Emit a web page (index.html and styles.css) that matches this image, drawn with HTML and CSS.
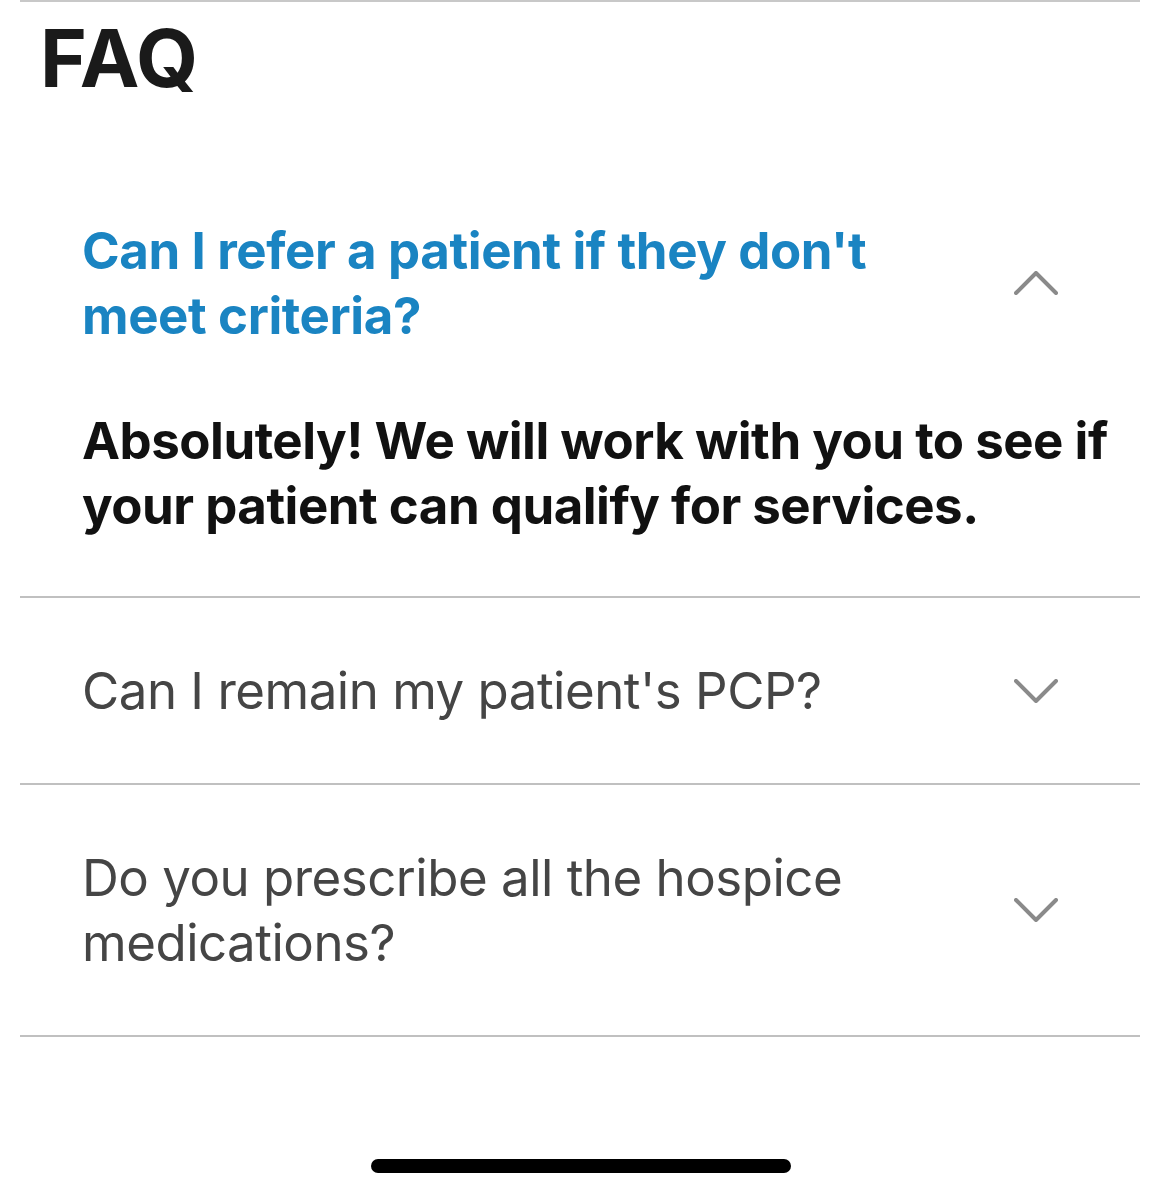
FILE: index.html
```html
<!DOCTYPE html>
<html lang="en">
  <head>
    <meta charset="UTF-8" />
    <meta name="viewport" content="width=device-width, initial-scale=1.0" />
    <title>FAQ</title>
    <link rel="stylesheet" href="styles.css">
  </head>

  <body>
    <div class="page">
      <h1 class="title">FAQ</h1>

      <div class="faq">
        <div class="item open">
          <div class="question">
            <span class="q-text">Can I refer a patient if they don't meet criteria?</span>
            <svg class="chevron" viewBox="0 0 44 24" width="44" height="24">
              <polyline points="2,22 22,2 42,22" />
            </svg>
          </div>
          <p class="answer">Absolutely! We will work with you to see if your patient can qualify for services.</p>
        </div>

        <div class="item">
          <div class="question">
            <span class="q-text">Can I remain my patient's PCP?</span>
            <svg class="chevron" viewBox="0 0 44 24" width="44" height="24">
              <polyline points="2,2 22,22 42,2" />
            </svg>
          </div>
        </div>

        <div class="item">
          <div class="question">
            <span class="q-text">Do you prescribe all the hospice medications?</span>
            <svg class="chevron" viewBox="0 0 44 24" width="44" height="24">
              <polyline points="2,2 22,22 42,2" />
            </svg>
          </div>
        </div>
      </div>

      <div class="home-bar"></div>
    </div>
  </body>
</html>
```

FILE: styles.css
```css
body {
  margin: 0;
  background: #fff;
  font-family: Inter, "Noto Sans", sans-serif;
}

.page {
  width: 1170px;
  height: 1198px;
  display: flex;
  flex-direction: column;
}

.title {
  margin: 0 30px 0 20px;
  border-top: 2px solid #c8c8c8;
  padding: 11px 0 0 20px;
  height: 158px;
  box-sizing: border-box;
  font-size: 80px;
  font-weight: 700;
  letter-spacing: 0;
  line-height: 90px;
  color: #1a1a1a;
}

.faq {
  margin: 0 30px 0 20px;
}

.item {
  border-bottom: 2px solid #c0c0c0;
}

.question {
  display: flex;
  align-items: center;
  justify-content: space-between;
  padding: 60px 82px 60px 62px;
}

.q-text {
  width: 840px;
  font-size: 51px;
  line-height: 65px;
  letter-spacing: -0.5px;
  color: #454545;
}

.open .q-text {
  color: #1a84c2;
  font-weight: 700;
  letter-spacing: -0.4px;
}

.chevron {
  fill: none;
  stroke: #8a8a8a;
  stroke-width: 4;
  stroke-linecap: round;
  stroke-linejoin: round;
}

.answer {
  margin: 0;
  padding: 0 20px 58px 62px;
  font-size: 51px;
  line-height: 65px;
  letter-spacing: -0.5px;
  font-weight: 700;
  color: #111;
}

.home-bar {
  width: 420px;
  height: 14px;
  border-radius: 7px;
  background: #000;
  margin: auto 0 25px 371px;
}
```
